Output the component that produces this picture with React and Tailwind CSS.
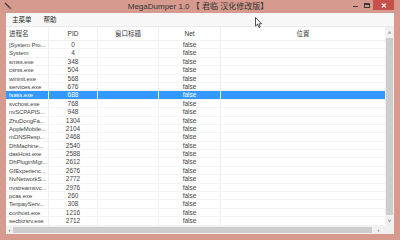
const ROWS = [
  ['[System Pro...', '0'],
  ['System', '4'],
  ['smss.exe', '348'],
  ['csrss.exe', '504'],
  ['wininit.exe', '568'],
  ['services.exe', '676'],
  ['lsass.exe', '688'],
  ['svchost.exe', '768'],
  ['nvSCPAPIS...', '948'],
  ['ZhuDongFa...', '1304'],
  ['AppleMobile...', '2104'],
  ['mDNSResp...', '2468'],
  ['DhMachine...', '2540'],
  ['dasHost.exe', '2588'],
  ['DhPluginMgr...', '2612'],
  ['GfExperienc...', '2676'],
  ['NvNetworkS...', '2772'],
  ['nvstreamsvc...', '2976'],
  ['pcas.exe', '260'],
  ['TenpayServ...', '308'],
  ['conhost.exe', '1216'],
  ['secbizsrv.exe', '2712'],
]

const SELECTED = 6

function Cols({ a, b, c, d, e, cls, nameCls = '' }) {
  return (
    <>
      <div className={`w-[42px] shrink-0 pl-[3px] overflow-hidden whitespace-nowrap ${nameCls} ${cls}`}>{a}</div>
      <div className={`w-[49px] shrink-0 text-center border-l border-[#f0f0f0] ${cls}`}>{b}</div>
      <div className={`w-[61px] shrink-0 text-center border-l border-[#f0f0f0] ${cls}`}>{c}</div>
      <div className={`w-[62px] shrink-0 text-center border-l border-[#f0f0f0] ${cls}`}>{d}</div>
      <div className={`flex-1 text-center border-l border-[#f0f0f0] ${cls}`}>{e}</div>
    </>
  )
}

export default function App() {
  return (
    <div className="relative w-[400px] h-[240px] bg-[#d69a8e] flex flex-col overflow-hidden font-['Liberation_Sans','Noto_Sans_CJK_SC',sans-serif]">
      {/* title bar */}
      <div className="relative h-[13px] shrink-0 flex items-center justify-center">
        <svg className="absolute left-[4px] top-[2px]" width="8" height="8" viewBox="0 0 8 8">
          <path d="M1 1 L6 6" stroke="#3a3a3a" strokeWidth="1.2" />
          <path d="M5 5 L7 7" stroke="#666" strokeWidth="1.4" />
        </svg>
        <span className="text-[8px] leading-none text-[#333] ml-[-4px]">MegaDumper 1.0 【 君临 汉化修改版】</span>
        <div className="absolute right-0 top-0 h-[10px] flex items-start">
          <div className="w-[12px] h-[10px] flex items-center justify-center">
            <div className="w-[5px] h-[1px] bg-[#3a3a3a] mt-[3px]" />
          </div>
          <div className="w-[12px] h-[10px] flex items-center justify-center">
            <div className="w-[6px] h-[5px] border border-[#3a3a3a] border-t-2" />
          </div>
          <div className="w-[21px] h-[10px] bg-[#c7504a] flex items-center justify-center mr-[6px]">
            <span className="text-white text-[7px] leading-none font-bold">✕</span>
          </div>
        </div>
      </div>

      <div className="flex-1 mx-[6px] flex flex-col bg-white">
        {/* menu */}
        <div className="h-[14px] shrink-0 bg-[#f7f7f7] flex items-center text-[6.5px] text-[#222] border-b border-[#eaeaea]">
          <span className="ml-[4px] px-[2px]">主菜单</span>
          <span className="ml-[8px] px-[2px]">帮助</span>
        </div>

        {/* list + vertical scrollbar */}
        <div className="flex-1 flex min-h-0">
          <div className="flex-1 flex flex-col">
            <div className="h-[14px] shrink-0 flex items-center text-[6.5px] text-[#333] border-b border-[#f0f0f0]">
              <Cols a="进程名" b="PID" c="窗口标题" d="Net" e="位置" cls="h-full flex items-center justify-center first:justify-start" />
            </div>
            {ROWS.map(([name, pid], i) => {
              const sel = i === SELECTED
              return (
                <div
                  key={name}
                  className={`h-[8.4px] flex text-[6.5px] leading-[8.4px] border-b border-[#f3f3f3] ${
                    sel ? 'bg-[#3399ff] text-white' : 'text-[#444]'
                  }`}
                >
                  <Cols a={name} b={pid} c="" d="false" e="" cls="" nameCls="text-[6px] tracking-[-0.1px]" />
                </div>
              )
            })}
          </div>
          <div className="w-[9px] shrink-0 bg-[#f0f0f0] flex flex-col items-center">
            <div className="h-[11px] flex items-center justify-center text-[6px] text-[#555] leading-none">˄</div>
            <div className="flex-1 w-[7px] bg-[#cdcdcd]" />
            <div className="h-[11px] flex items-center justify-center text-[6px] text-[#555] leading-none">˅</div>
          </div>
        </div>

        {/* horizontal scrollbar */}
        <div className="h-[8px] shrink-0 flex bg-[#f0f0f0]">
          <div className="flex-1 flex items-center">
            <span className="w-[7px] text-center text-[6px] text-[#555] leading-none">‹</span>
            <div className="flex-1 h-[6px] bg-[#cdcdcd]" />
            <span className="w-[13px] text-center text-[6px] text-[#555] leading-none">›</span>
          </div>
          <div className="w-[9px] bg-[#f0f0f0]" />
        </div>
      </div>

      <div className="h-[6px] shrink-0" />

      {/* mouse cursor */}
      <svg className="absolute left-[255px] top-[17px]" width="8" height="12" viewBox="0 0 8 12">
        <path d="M0.5 0.5 L0.5 9 L2.5 7.2 L4 10.5 L5.3 9.9 L3.9 6.8 L6.6 6.8 Z" fill="white" stroke="#222" strokeWidth="0.8" />
      </svg>
    </div>
  )
}
